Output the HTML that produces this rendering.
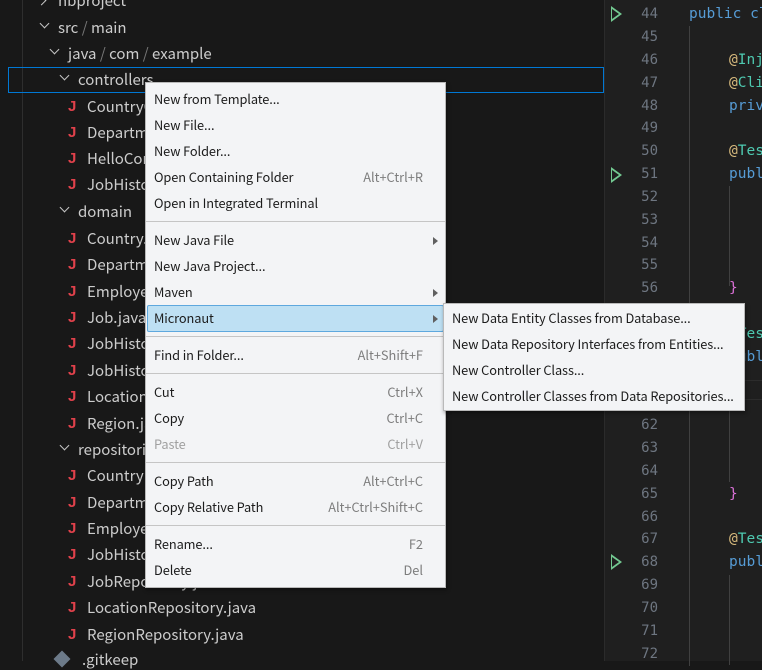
<!DOCTYPE html>
<html><head><meta charset="utf-8"><style>
*{margin:0;padding:0;box-sizing:border-box}
body{width:762px;height:661px;overflow:hidden;background:#181818;position:relative;font-family:"Noto Sans CJK SC","Liberation Sans",sans-serif}
.t{position:absolute;color:#cccccc;font-size:15px;line-height:20px;white-space:nowrap}
.j{position:absolute;color:#e0414b;font-weight:bold;font-size:15px;line-height:20px;font-family:"Liberation Sans",sans-serif}
.ch{position:absolute;width:7px;height:7px;border-right:1.4px solid #c5c5c5;border-bottom:1.4px solid #c5c5c5}
.ed{position:absolute;left:604px;top:0;width:158px;height:661px;background:#1f1f1f;border-left:1px solid #2b2b2b}
.ln{position:absolute;left:620px;width:38px;text-align:right;color:#6e7681;font-family:"DejaVu Sans Mono",monospace;font-size:14px;line-height:20px}
.c{position:absolute;font-family:"DejaVu Sans Mono",monospace;font-size:14.5px;line-height:20px;white-space:nowrap}
.g{position:absolute;width:1px;background:#404040}
.menu{position:absolute;background:#f3f4f6;border:1px solid #b9b9b9;box-shadow:1px 2px 4px rgba(0,0,0,.4)}
.mi{position:absolute;left:8px;font-size:12.8px;line-height:18px;color:#1c1c1c;white-space:nowrap;letter-spacing:-0.1px}
.sc{position:absolute;right:22px;font-size:12.8px;line-height:18px;color:#7d7d7d;white-space:nowrap}
.sep{position:absolute;left:0;right:0;height:1px;background:#c5c5c5}
.ar{position:absolute;right:7px;width:0;height:0;border-left:5px solid #606060;border-top:4px solid transparent;border-bottom:4px solid transparent}
.tri{position:absolute;left:611px;width:0;height:0;border-left:11px solid #73c991;border-top:8px solid transparent;border-bottom:8px solid transparent}
.tri:after{content:"";position:absolute;left:-10px;top:-5px;border-left:7px solid #1f1f1f;border-top:5px solid transparent;border-bottom:5px solid transparent}
</style></head><body>
<div style="position:absolute;left:22px;top:0;width:1px;height:661px;background:#2e2e2e"></div>
<div style="position:absolute;left:8px;top:67px;width:596px;height:26px;border:1px solid #0078d4"></div>
<div class="ch" style="left:38px;top:-3px;transform:rotate(-45deg)"></div><div class="t" style="left:58px;top:-9px">nbproject</div>
<div class="ch" style="left:41px;top:20px;transform:rotate(45deg)"></div><div class="t" style="left:58px;top:18px">src<span style="color:#777"> / </span>main</div>
<div class="ch" style="left:51px;top:46px;transform:rotate(45deg)"></div><div class="t" style="left:68px;top:44px">java<span style="color:#777"> / </span>com<span style="color:#777"> / </span>example</div>
<div class="ch" style="left:61px;top:72px;transform:rotate(45deg)"></div><div class="t" style="left:78px;top:70px">controllers</div>
<div class="j" style="left:68px;top:97px">J</div><div class="t" style="left:87px;top:97px">CountryController.java</div>
<div class="j" style="left:68px;top:123px">J</div><div class="t" style="left:87px;top:123px">DepartmentController.java</div>
<div class="j" style="left:68px;top:149px">J</div><div class="t" style="left:87px;top:149px">HelloController.java</div>
<div class="j" style="left:68px;top:175px">J</div><div class="t" style="left:87px;top:175px">JobHistoryController.java</div>
<div class="ch" style="left:61px;top:204px;transform:rotate(45deg)"></div><div class="t" style="left:78px;top:202px">domain</div>
<div class="j" style="left:68px;top:229px">J</div><div class="t" style="left:87px;top:229px">Country.java</div>
<div class="j" style="left:68px;top:255px">J</div><div class="t" style="left:87px;top:255px">Department.java</div>
<div class="j" style="left:68px;top:282px">J</div><div class="t" style="left:87px;top:282px">Employee.java</div>
<div class="j" style="left:68px;top:308px">J</div><div class="t" style="left:87px;top:308px">Job.java</div>
<div class="j" style="left:68px;top:334px">J</div><div class="t" style="left:87px;top:334px">JobHistory.java</div>
<div class="j" style="left:68px;top:361px">J</div><div class="t" style="left:87px;top:361px">JobHistoryId.java</div>
<div class="j" style="left:68px;top:387px">J</div><div class="t" style="left:87px;top:387px">Location.java</div>
<div class="j" style="left:68px;top:414px">J</div><div class="t" style="left:87px;top:414px">Region.java</div>
<div class="ch" style="left:61px;top:442px;transform:rotate(45deg)"></div><div class="t" style="left:78px;top:440px">repositories</div>
<div class="j" style="left:68px;top:466px">J</div><div class="t" style="left:87px;top:466px">CountryRepository.java</div>
<div class="j" style="left:68px;top:493px">J</div><div class="t" style="left:87px;top:493px">DepartmentRepository.java</div>
<div class="j" style="left:68px;top:519px">J</div><div class="t" style="left:87px;top:519px">EmployeeRepository.java</div>
<div class="j" style="left:68px;top:545px">J</div><div class="t" style="left:87px;top:545px">JobHistoryRepository.java</div>
<div class="j" style="left:68px;top:572px">J</div><div class="t" style="left:87px;top:572px">JobRepository.java</div>
<div class="j" style="left:68px;top:598px">J</div><div class="t" style="left:87px;top:598px">LocationRepository.java</div>
<div class="j" style="left:68px;top:625px">J</div><div class="t" style="left:87px;top:625px">RegionRepository.java</div>
<div style="position:absolute;left:56px;top:653px;width:12px;height:12px;background:#6c7a89;transform:rotate(45deg)"></div><div class="t" style="left:82px;top:650px">.gitkeep</div>
<div class="ed"></div>
<div class="g" style="left:689px;top:26px;height:640px"></div>
<div class="g" style="left:729px;top:186px;height:100px"></div>
<div class="g" style="left:729px;top:392px;height:90px"></div>
<div class="g" style="left:729px;top:575px;height:90px"></div>
<div style="position:absolute;left:660px;top:380px;width:102px;height:20px;border-top:1px solid #2c2c2c;border-bottom:1px solid #2c2c2c"></div>
<div class="tri" style="top:6px"></div><div class="tri" style="top:167px"></div><div class="tri" style="top:554px"></div>
<div class="ln" style="top:4px">44</div><div class="ln" style="top:27px">45</div><div class="ln" style="top:50px">46</div><div class="ln" style="top:73px">47</div><div class="ln" style="top:96px">48</div><div class="ln" style="top:118px">49</div><div class="ln" style="top:141px">50</div><div class="ln" style="top:164px">51</div><div class="ln" style="top:187px">52</div><div class="ln" style="top:210px">53</div><div class="ln" style="top:233px">54</div><div class="ln" style="top:255px">55</div><div class="ln" style="top:278px">56</div><div class="ln" style="top:301px">57</div><div class="ln" style="top:324px">58</div><div class="ln" style="top:347px">59</div><div class="ln" style="top:370px">60</div><div class="ln" style="top:392px">61</div><div class="ln" style="top:415px">62</div><div class="ln" style="top:438px">63</div><div class="ln" style="top:461px">64</div><div class="ln" style="top:484px">65</div><div class="ln" style="top:507px">66</div><div class="ln" style="top:529px">67</div><div class="ln" style="top:552px">68</div><div class="ln" style="top:575px">69</div><div class="ln" style="top:598px">70</div><div class="ln" style="top:621px">71</div><div class="ln" style="top:644px">72</div>
<div class="c" style="left:689px;top:4px;color:#569cd6">public class</div>
<div class="c" style="left:729px;top:50px"><span style="color:#d7ba7d">@</span><span style="color:#4ec9b0">Inject</span></div>
<div class="c" style="left:729px;top:73px"><span style="color:#d7ba7d">@</span><span style="color:#4ec9b0">Client</span></div>
<div class="c" style="left:729px;top:96px;color:#569cd6">private</div>
<div class="c" style="left:729px;top:141px"><span style="color:#d7ba7d">@</span><span style="color:#4ec9b0">Test</span></div>
<div class="c" style="left:729px;top:164px;color:#569cd6">public</div>
<div class="c" style="left:729px;top:278px;color:#da70d6">}</div>
<div class="c" style="left:729px;top:324px"><span style="color:#d7ba7d">@</span><span style="color:#4ec9b0">Test</span></div>
<div class="c" style="left:729px;top:347px;color:#569cd6">public</div>
<div class="c" style="left:729px;top:484px;color:#da70d6">}</div>
<div class="c" style="left:729px;top:529px"><span style="color:#d7ba7d">@</span><span style="color:#4ec9b0">Test</span></div>
<div class="c" style="left:729px;top:552px;color:#569cd6">public</div>
<div class="menu" style="left:145px;top:82px;width:301px;height:506px">
<div class="mi" style="top:7px">New from Template...</div>
<div class="mi" style="top:33px">New File...</div>
<div class="mi" style="top:59px">New Folder...</div>
<div class="mi" style="top:85px">Open Containing Folder</div><div class="sc" style="top:85px">Alt+Ctrl+R</div>
<div class="mi" style="top:111px">Open in Integrated Terminal</div>
<div class="sep" style="top:138px"></div>
<div class="mi" style="top:148px">New Java File</div><div class="ar" style="top:154px"></div>
<div class="mi" style="top:174px">New Java Project...</div>
<div class="mi" style="top:200px">Maven</div><div class="ar" style="top:206px"></div>
<div style="position:absolute;left:1px;top:222px;width:297px;height:27px;background:#bee0f3;border:1px solid #5ea8de;border-radius:2px"></div>
<div class="mi" style="top:226px">Micronaut</div><div class="ar" style="top:232px"></div>
<div class="sep" style="top:253px"></div>
<div class="mi" style="top:263px">Find in Folder...</div><div class="sc" style="top:263px">Alt+Shift+F</div>
<div class="sep" style="top:290px"></div>
<div class="mi" style="top:300px">Cut</div><div class="sc" style="top:300px">Ctrl+X</div>
<div class="mi" style="top:326px">Copy</div><div class="sc" style="top:326px">Ctrl+C</div>
<div class="mi" style="top:352px;color:#a0a0a0">Paste</div><div class="sc" style="top:352px;color:#a0a0a0">Ctrl+V</div>
<div class="sep" style="top:379px"></div>
<div class="mi" style="top:389px">Copy Path</div><div class="sc" style="top:389px">Alt+Ctrl+C</div>
<div class="mi" style="top:415px">Copy Relative Path</div><div class="sc" style="top:415px">Alt+Ctrl+Shift+C</div>
<div class="sep" style="top:442px"></div>
<div class="mi" style="top:452px">Rename...</div><div class="sc" style="top:452px">F2</div>
<div class="mi" style="top:478px">Delete</div><div class="sc" style="top:478px">Del</div>
</div>
<div class="menu" style="left:443px;top:303px;width:302px;height:108px">
<div class="mi" style="top:5px">New Data Entity Classes from Database...</div>
<div class="mi" style="top:31px">New Data Repository Interfaces from Entities...</div>
<div class="mi" style="top:57px">New Controller Class...</div>
<div class="mi" style="top:83px">New Controller Classes from Data Repositories...</div>
</div>
</body></html>
